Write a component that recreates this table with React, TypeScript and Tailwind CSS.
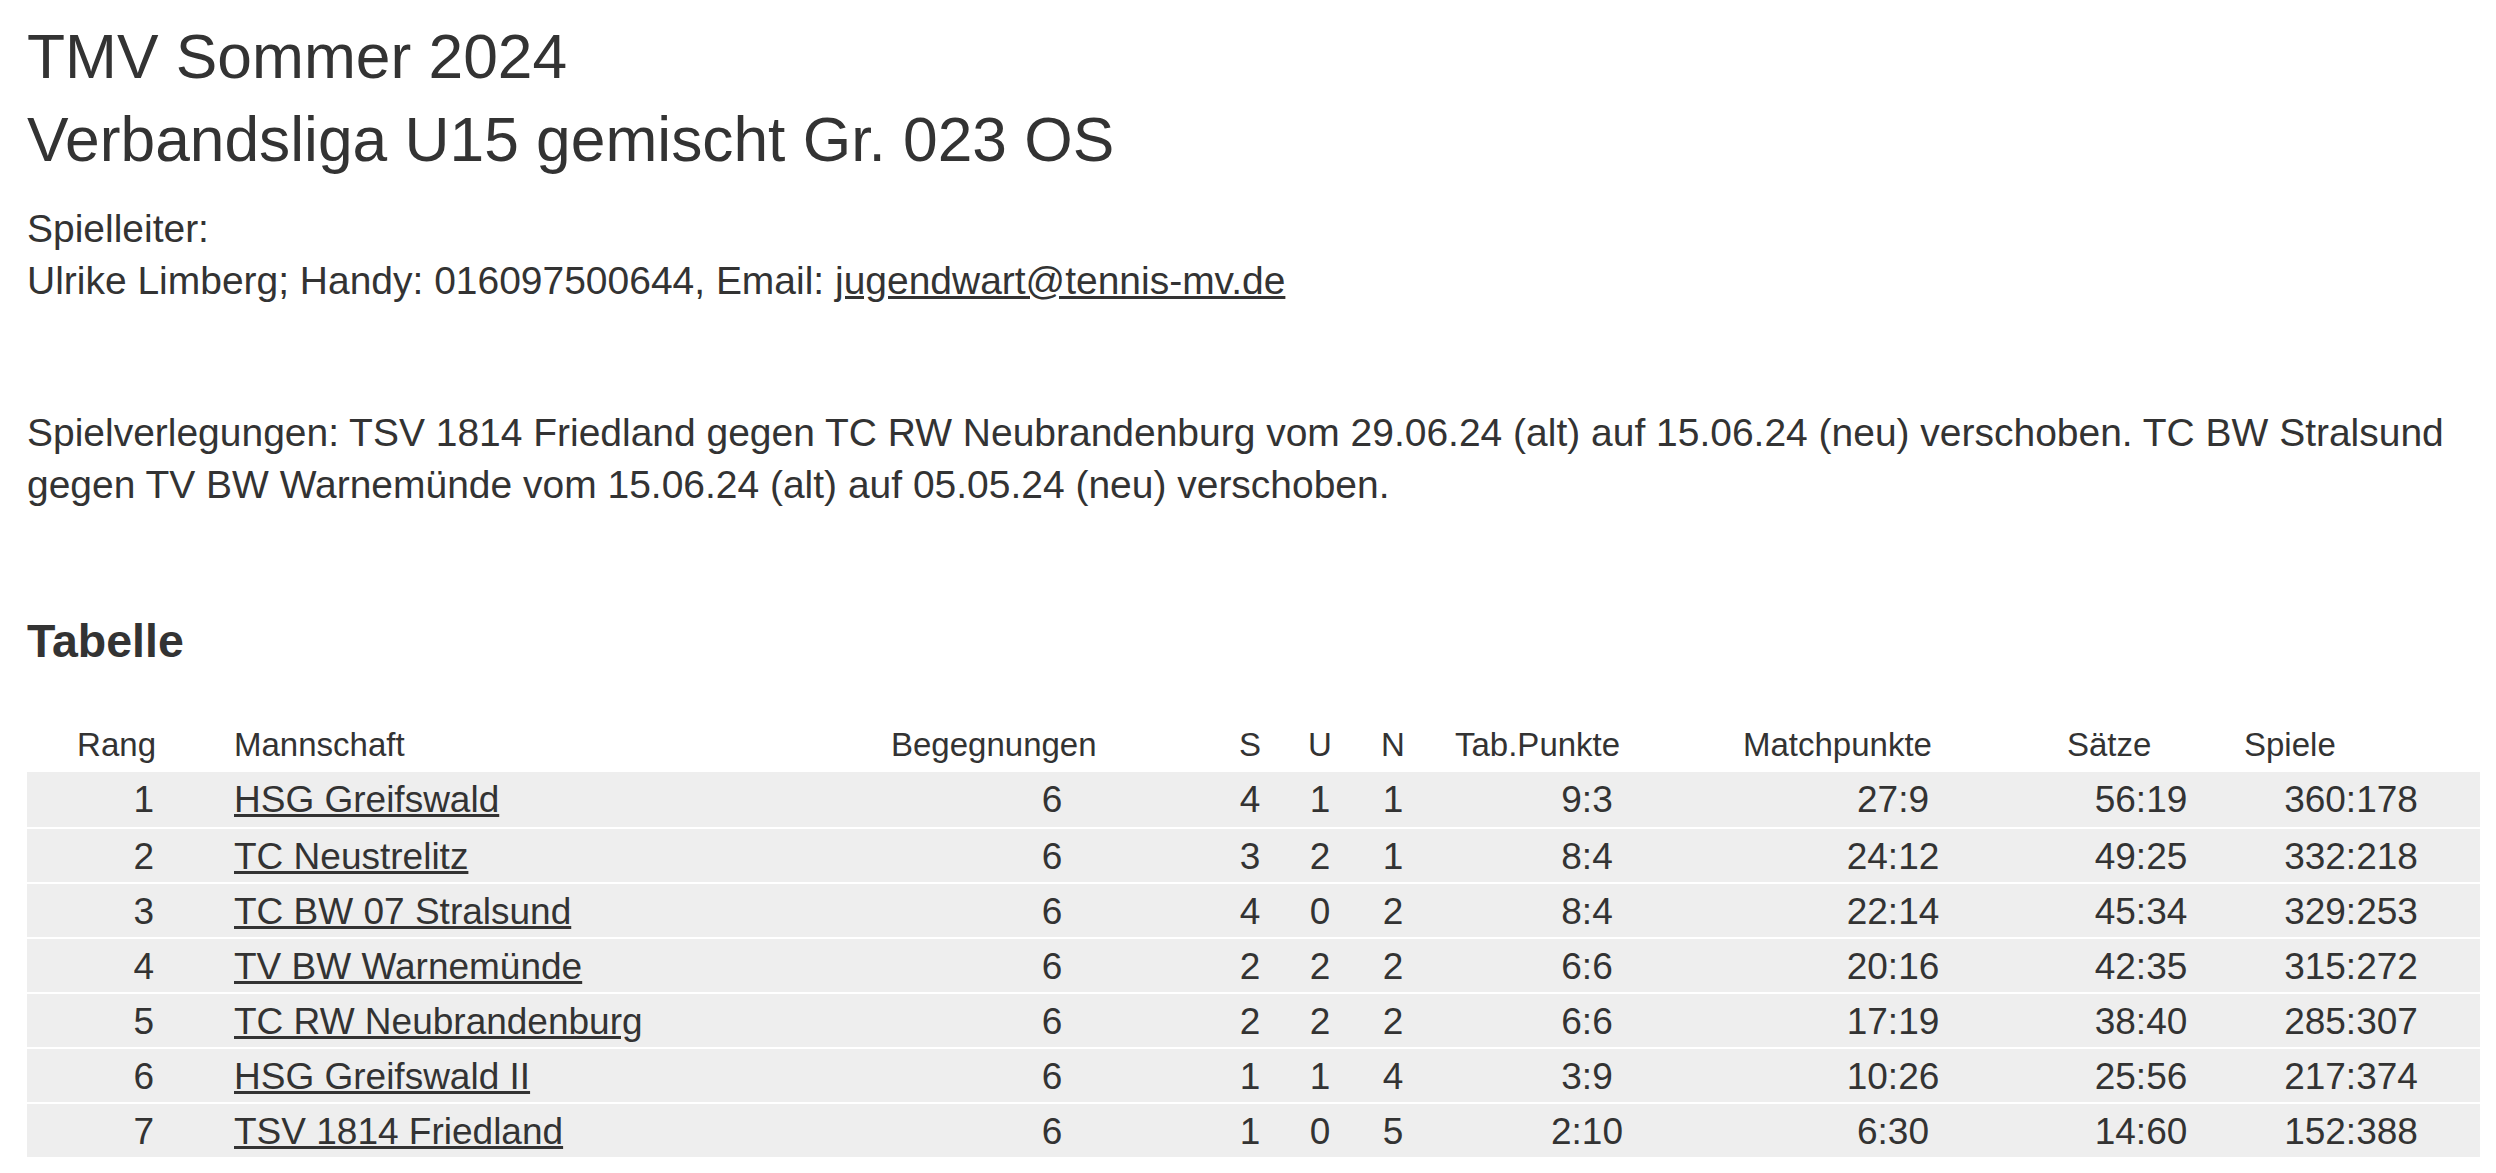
import React from "react";

interface Row {
  rang: number;
  team: string;
  beg: number;
  s: number;
  u: number;
  n: number;
  tab: string;
  match: string;
  saetze: string;
  spiele: string;
}

const rows: Row[] = [
  { rang: 1, team: "HSG Greifswald", beg: 6, s: 4, u: 1, n: 1, tab: "9:3", match: "27:9", saetze: "56:19", spiele: "360:178" },
  { rang: 2, team: "TC Neustrelitz", beg: 6, s: 3, u: 2, n: 1, tab: "8:4", match: "24:12", saetze: "49:25", spiele: "332:218" },
  { rang: 3, team: "TC BW 07 Stralsund", beg: 6, s: 4, u: 0, n: 2, tab: "8:4", match: "22:14", saetze: "45:34", spiele: "329:253" },
  { rang: 4, team: "TV BW Warnemünde", beg: 6, s: 2, u: 2, n: 2, tab: "6:6", match: "20:16", saetze: "42:35", spiele: "315:272" },
  { rang: 5, team: "TC RW Neubrandenburg", beg: 6, s: 2, u: 2, n: 2, tab: "6:6", match: "17:19", saetze: "38:40", spiele: "285:307" },
  { rang: 6, team: "HSG Greifswald II", beg: 6, s: 1, u: 1, n: 4, tab: "3:9", match: "10:26", saetze: "25:56", spiele: "217:374" },
  { rang: 7, team: "TSV 1814 Friedland", beg: 6, s: 1, u: 0, n: 5, tab: "2:10", match: "6:30", saetze: "14:60", spiele: "152:388" },
];

const cols = "grid grid-cols-[131px_718px_352px_44px_96px_50px_310px_323px_177px_252px] items-center";

export default function App() {
  return (
    <div
      className="min-h-screen bg-white px-[27px] pt-[15px] pb-4 text-[#333333]"
      style={{ fontFamily: '"Liberation Sans", Arial, sans-serif' }}
    >
      <h1 className="text-[62.3px] leading-[83px] font-normal">
        TMV Sommer 2024
        <br />
        Verbandsliga U15 gemischt Gr. 023 OS
      </h1>

      <div className="mt-[22px] text-[38.97px] leading-[52px]">
        <p>Spielleiter:</p>
        <p>
          Ulrike Limberg; Handy: 016097500644, Email:{" "}
          <a href="#" className="underline">jugendwart@tennis-mv.de</a>
        </p>
        <p className="mt-[100px] w-[2453px]">
          Spielverlegungen: TSV 1814 Friedland gegen TC RW Neubrandenburg vom 29.06.24 (alt) auf 15.06.24 (neu)
          verschoben. TC BW Stralsund gegen TV BW Warnemünde vom 15.06.24 (alt) auf 05.05.24 (neu) verschoben.
        </p>
      </div>

      <h2 className="mt-[102px] text-[46.5px] leading-[56px] font-bold">Tabelle</h2>

      <div className="mt-[48px] w-[2453px]">
        <div className={`${cols} h-[55px] text-[33px]`}>
          <div className="pr-[2px] text-right">Rang</div>
          <div className="pl-[76px]">Mannschaft</div>
          <div className="pl-[15px]">Begegnungen</div>
          <div className="text-center">S</div>
          <div className="text-center">U</div>
          <div className="text-center">N</div>
          <div className="pl-[37px]">Tab.Punkte</div>
          <div className="pl-[15px]">Matchpunkte</div>
          <div className="pl-[16px]">Sätze</div>
          <div className="pl-[16px]">Spiele</div>
        </div>

        {rows.map((r, i) => (
          <div
            key={r.rang}
            className={`${cols} h-[55px] bg-[#eeeeee] text-[37px] ${i > 0 ? "border-t-[2.5px] border-white" : ""}`}
          >
            <div className="pr-[4px] text-right">{r.rang}</div>
            <div className="pl-[76px]">
              <a href="#" className="underline">{r.team}</a>
            </div>
            <div className="text-center">{r.beg}</div>
            <div className="text-center">{r.s}</div>
            <div className="text-center">{r.u}</div>
            <div className="text-center">{r.n}</div>
            <div className="pl-[28px] text-center">{r.tab}</div>
            <div className="pl-[7px] text-center">{r.match}</div>
            <div className="pl-[3px] text-center">{r.saetze}</div>
            <div className="pr-[6px] text-center">{r.spiele}</div>
          </div>
        ))}
      </div>
    </div>
  );
}
